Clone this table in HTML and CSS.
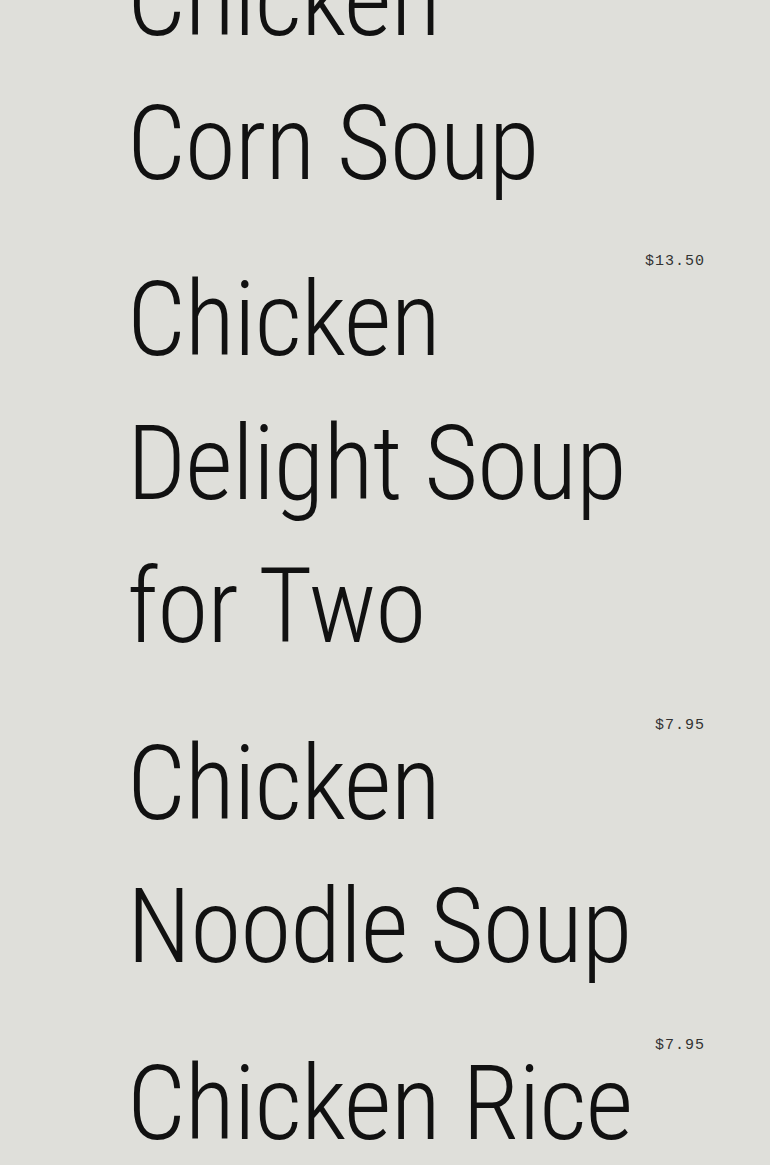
FILE: index.html
```html
<!DOCTYPE html>
<html lang="en">
<head>
    <meta charset="UTF-8">
    <meta name="viewport" content="width=device-width, initial-scale=1.0">
    <title>Soups</title>
    <link rel="stylesheet" href="styles.css">
</head>
<body>
    <!-- Список блюд -->
    <div class="menu">
        <div class="item">
            <h2 class="name">Chicken Corn Soup</h2>
            <span class="price">$7.95</span>
        </div>
        <div class="item">
            <h2 class="name">Chicken Delight Soup for Two</h2>
            <span class="price">$13.50</span>
        </div>
        <div class="item">
            <h2 class="name">Chicken Noodle Soup</h2>
            <span class="price">$7.95</span>
        </div>
        <div class="item">
            <h2 class="name">Chicken Rice Soup</h2>
            <span class="price">$7.95</span>
        </div>
    </div>
</body>
</html>
```
FILE: styles.css
```css
body {
    margin: 0;
    padding: 0;
    background-color: #dfdfda;
    color: #111;
}
.menu {
    margin-top: -72px;
    padding: 0 65px 0 127px;
    display: flex;
    flex-direction: column;
    gap: 33px;
}
.item {
    display: flex;
    justify-content: space-between;
    align-items: flex-start;
}
.name {
    flex: 0 1 518px;
    margin: 0;
    font-family: Roboto, "Liberation Sans", sans-serif;
    font-stretch: condensed;
    font-weight: 340;
    font-size: 104px;
    line-height: 143.5px;
    letter-spacing: -1px;
}
.price {
    padding-top: 4px;
    font-family: "Liberation Mono", monospace;
    font-size: 15px;
    letter-spacing: 1px;
    line-height: 20px;
    color: #333;
}
```
